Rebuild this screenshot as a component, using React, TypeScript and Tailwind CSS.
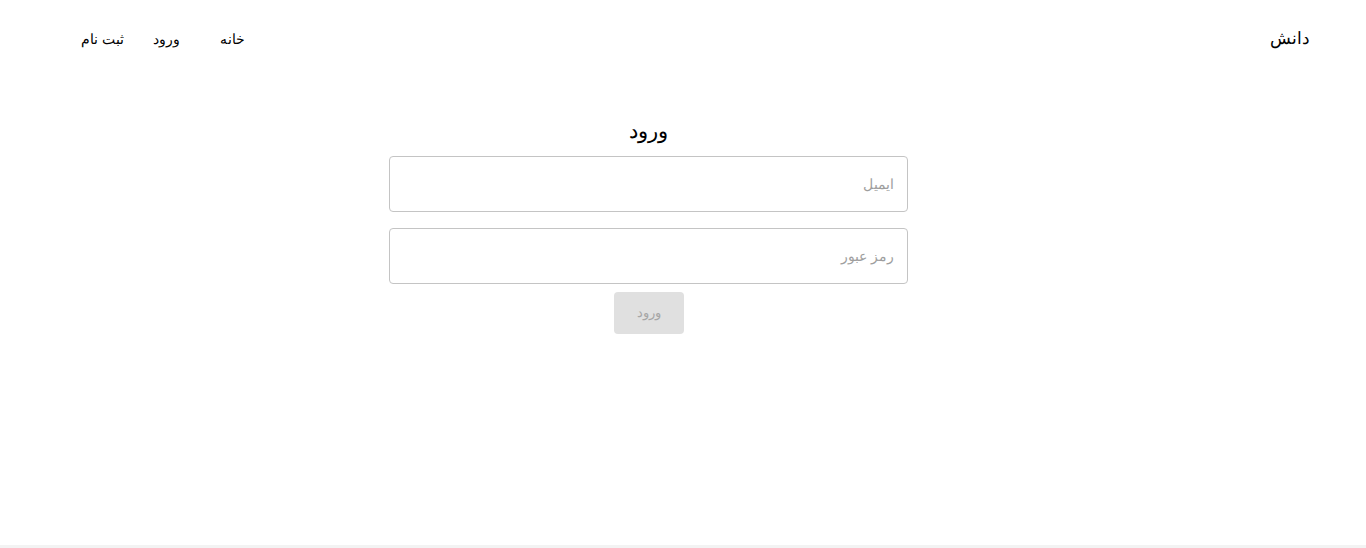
import React from 'react';

const navLinks = [
  { label: 'خانه', className: 'ml-[40px]' },
  { label: 'ورود', className: 'ml-[29px]' },
  { label: 'ثبت نام', className: '' },
];

export default function App() {
  return (
    <div
      dir="rtl"
      className="flex h-[548px] flex-col bg-white text-black"
      style={{ fontFamily: '"Noto Sans", sans-serif' }}
    >
      <header className="flex h-[80px] items-center justify-between pl-[81px] pr-[56px]">
        <span className="pb-[3px] text-[16.5px]">دانش</span>
        <nav className="flex items-center pb-[3px] text-[14.3px]">
          {navLinks.map((link, i) => (
            <a key={i} href="#" className={link.className}>
              {link.label}
            </a>
          ))}
        </nav>
      </header>

      <main className="flex flex-1 justify-center pr-[69px] pt-[36px]">
        <form className="flex w-[519px] flex-col items-center">
          <h1 className="mb-[12px] text-[21px] font-medium leading-[28px]">ورود</h1>
          <input
            type="email"
            placeholder="ایمیل"
            className="h-[56px] w-full rounded-[4px] border border-[#c4c4c4] px-[13px] pb-[2px] text-[14px] placeholder:text-[#9e9e9e] outline-none"
          />
          <input
            type="password"
            placeholder="رمز عبور"
            className="mt-[16px] h-[56px] w-full rounded-[4px] border border-[#c4c4c4] px-[13px] pb-[2px] text-[14px] placeholder:text-[#9e9e9e] outline-none"
          />
          <button
            type="button"
            disabled
            className="mt-[8px] h-[42px] w-[70px] rounded-[4px] bg-[#e0e0e0] text-[13px] text-[#a6a6a6]"
          >
            ورود
          </button>
        </form>
      </main>

      <div className="h-[3px] bg-[#f3f3f3]" />
    </div>
  );
}
